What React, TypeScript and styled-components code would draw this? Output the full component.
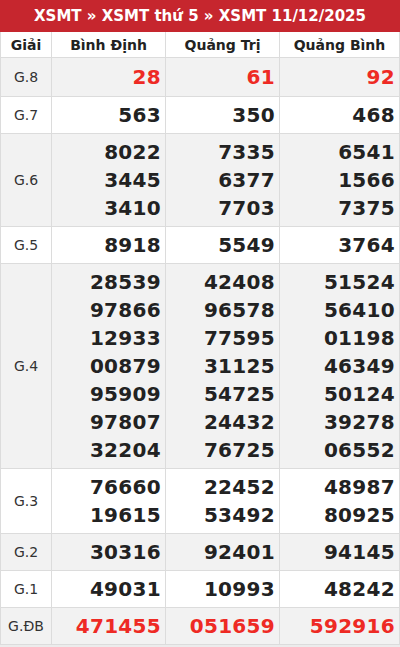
import styled, { createGlobalStyle } from 'styled-components';

type Prize = {
  label: string,
  results: string[][],
  isHighlight?: boolean,
  isTall?: boolean,
};

const provinces = ['Bình Định', 'Quảng Trị', 'Quảng Bình'];

const prizes: Prize[] = [
  { label: 'G.8', results: [['28'], ['61'], ['92']], isHighlight: true, isTall: true },
  { label: 'G.7', results: [['563'], ['350'], ['468']] },
  {
    label: 'G.6',
    results: [
      ['8022', '3445', '3410'],
      ['7335', '6377', '7703'],
      ['6541', '1566', '7375'],
    ],
  },
  { label: 'G.5', results: [['8918'], ['5549'], ['3764']] },
  {
    label: 'G.4',
    results: [
      ['28539', '97866', '12933', '00879', '95909', '97807', '32204'],
      ['42408', '96578', '77595', '31125', '54725', '24432', '76725'],
      ['51524', '56410', '01198', '46349', '50124', '39278', '06552'],
    ],
  },
  {
    label: 'G.3',
    results: [
      ['76660', '19615'],
      ['22452', '53492'],
      ['48987', '80925'],
    ],
  },
  { label: 'G.2', results: [['30316'], ['92401'], ['94145']] },
  { label: 'G.1', results: [['49031'], ['10993'], ['48242']] },
  { label: 'G.ĐB', results: [['471455'], ['051659'], ['592916']], isHighlight: true },
];

const App = () => (
  <>
    <GlobalStyle />
    <Board>
      <Title>XSMT » XSMT thứ 5 » XSMT 11/12/2025</Title>
      <Grid>
        <HeadCell>Giải</HeadCell>
        {provinces.map(name => (
          <HeadCell key={name}>{name}</HeadCell>
        ))}
        {prizes.map((prize, index) => {
          const isShaded = index % 2 === 0;
          return [
            <LabelCell key={`${prize.label}-label`} $isShaded={isShaded}>
              {prize.label}
            </LabelCell>,
            ...prize.results.map((numbers, col) => (
              <NumberCell
                key={`${prize.label}-${col}`}
                $isShaded={isShaded}
                $isLast={col === 2}
                $isTall={!!prize.isTall}
              >
                {numbers.map(num => (
                  <Number key={num} $isHighlight={!!prize.isHighlight}>{num}</Number>
                ))}
              </NumberCell>
            )),
          ];
        })}
      </Grid>
    </Board>
  </>
);

export default App;

const GlobalStyle = createGlobalStyle`
  html, body {
    margin: 0;
    padding: 0;
    background: #ececec;
  }
  body {
    font-family: "DejaVu Sans", Verdana, sans-serif;
    color: #222222;
  }
`;

const Board = styled.div`
  width: 400px;
  display: flex;
  flex-direction: column;
  background: #ffffff;
`;

const Title = styled.div`
  height: 32px;
  background: #c6262e;
  color: #ffffff;
  font-size: 15px;
  font-weight: bold;
  display: flex;
  align-items: center;
  justify-content: center;
`;

const Grid = styled.div`
  display: grid;
  grid-template-columns: 51px 114px 114px 1fr;
  border-left: 1px solid #dcdcdc;
  border-right: 1px solid #dcdcdc;
`;

const HeadCell = styled.div`
  height: 25px;
  display: flex;
  align-items: center;
  justify-content: center;
  font-size: 14px;
  font-weight: bold;
  color: #222222;
  border-bottom: 1px solid #dcdcdc;
  &:not(:nth-child(4)) {
    border-right: 1px solid #dcdcdc;
  }
`;

const LabelCell = styled.div<{ $isShaded: boolean }>`
  display: flex;
  align-items: center;
  justify-content: center;
  font-size: 14px;
  color: #333333;
  background: ${({ $isShaded }) => ($isShaded ? '#f2f2f2' : '#ffffff')};
  border-right: 1px solid #dcdcdc;
  border-bottom: 1px solid #dcdcdc;
`;

const NumberCell = styled.div<{ $isShaded: boolean, $isLast: boolean, $isTall: boolean }>`
  display: flex;
  flex-direction: column;
  align-items: flex-end;
  padding: ${({ $isTall }) => ($isTall ? '5px 4px 5px 0' : '4px 4px 4px 0')};
  background: ${({ $isShaded }) => ($isShaded ? '#f2f2f2' : '#ffffff')};
  border-bottom: 1px solid #dcdcdc;
  border-right: ${({ $isLast }) => ($isLast ? 'none' : '1px solid #dcdcdc')};
`;

const Number = styled.div<{ $isHighlight: boolean }>`
  font-size: 20px;
  line-height: 28px;
  font-weight: bold;
  letter-spacing: 0.3px;
  color: ${({ $isHighlight }) => ($isHighlight ? '#ee2a24' : '#222222')};
`;
